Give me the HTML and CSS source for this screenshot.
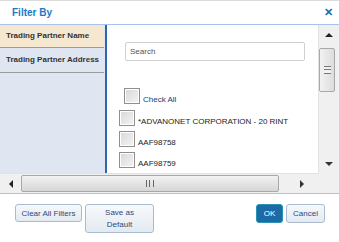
FILE: index.html
```html
<!DOCTYPE html>
<html lang="en">
<head>
    <meta charset="UTF-8">
    <title>Filter By</title>
    <link rel="stylesheet" href="styles.css">
</head>
<body>
    <div class="dialog">
        <div class="header">
            <h2>Filter By</h2>
            <span class="close">&#x2715;</span>
        </div>
        <div class="body">
            <div class="nav">
                <div class="nav-item active">Trading Partner Name</div>
                <div class="nav-item">Trading Partner Address</div>
            </div>
            <div class="content">
                <input type="text" class="search" placeholder="Search">
                <div class="check-all">
                    <span class="box"></span>
                    <span class="label all">Check All</span>
                </div>
                <div class="check-row">
                    <span class="box"></span>
                    <span class="label">*ADVANONET CORPORATION - 20 RINT</span>
                </div>
                <div class="check-row">
                    <span class="box"></span>
                    <span class="label">AAF98758</span>
                </div>
                <div class="check-row">
                    <span class="box"></span>
                    <span class="label">AAF98759</span>
                </div>
                <div class="check-row">
                    <span class="box"></span>
                    <span class="label"></span>
                </div>
            </div>
            <div class="vscroll">
                <div class="arrow up"></div>
                <div class="vthumb"><span class="grip"></span></div>
                <div class="spacer"></div>
                <div class="arrow down"></div>
            </div>
        </div>
        <div class="hscroll">
            <div class="htrack">
                <div class="arrow left"></div>
                <div class="hthumb"><span class="grip"></span></div>
                <div class="arrow right"></div>
            </div>
            <div class="corner"></div>
        </div>
        <div class="footer">
            <div class="footer-left">
                <button class="btn clear">Clear All Filters</button>
                <button class="btn tall">Save as<br>Default</button>
            </div>
            <div class="footer-right">
                <button class="btn primary">OK</button>
                <button class="btn cancel">Cancel</button>
            </div>
        </div>
    </div>
</body>
</html>
```

FILE: styles.css
```css
body {
    margin: 0;
    padding: 0;
    background-color: #fff;
    font-family: "Liberation Sans", Arial, sans-serif;
}
.dialog {
    width: 339px;
    height: 242px;
    display: flex;
    flex-direction: column;
    overflow: hidden;
}
.header {
    height: 23px;
    border-top: 1px solid #dcdcdc;
    border-bottom: 1px solid #a9c3e8;
    display: flex;
    align-items: center;
    justify-content: space-between;
    padding: 0 6px 0 12px;
}
.header h2 {
    margin: 0;
    font-size: 10px;
    font-weight: bold;
    color: #1b79c3;
}
.close {
    font-size: 11px;
    font-weight: bold;
    color: #1a6fb5;
}
.body {
    height: 148px;
    display: flex;
}
.nav {
    width: 105px;
    background-color: #dfe6f2;
    border-right: 2px solid #2e67ae;
}
.nav-item {
    height: 22px;
    line-height: 22px;
    padding-left: 6px;
    margin-right: 1px;
    border-bottom: 1px solid #9a9a9a;
    font-size: 8px;
    font-weight: bold;
    color: #333;
}
.nav-item.active {
    background-color: #f5e7d0;
}
.nav-item + .nav-item {
    height: 24px;
    line-height: 24px;
}
.content {
    flex: 1;
    padding: 17px 0 0 12px;
    overflow: hidden;
}
.search {
    display: block;
    box-sizing: border-box;
    width: 180px;
    height: 19px;
    margin: 0 0 0 6px;
    padding: 0 4px;
    border: 1px solid #d0d0d0;
    border-radius: 2px;
    font-family: "Liberation Sans", Arial, sans-serif;
    font-size: 8px;
    color: #333;
}
.search::placeholder {
    color: #555;
}
.check-all, .check-row {
    display: flex;
    align-items: flex-end;
    white-space: nowrap;
}
.check-all {
    margin: 27px 0 0 5px;
}
.check-row {
    margin-top: 5px;
}
.check-all + .check-row {
    margin-top: 6px;
}
.box {
    box-sizing: border-box;
    width: 16px;
    height: 16px;
    flex: none;
    border: 1px solid #8f8f8f;
    box-shadow: inset 0 0 0 1px #fff;
    background: linear-gradient(135deg, #d8d8d8, #f4f4f4);
}
.label {
    margin-left: 3px;
    font-size: 8px;
    line-height: 8px;
    color: #222;
}
.label.all {
    color: #243a70;
}
.vscroll {
    width: 21px;
    display: flex;
    flex-direction: column;
    background-color: #f0f0f0;
    box-sizing: border-box;
    border-left: 1px solid #e2e2e2;
}
.arrow {
    width: 0;
    height: 0;
}
.arrow.up {
    margin: 8px 0 0 6px;
    border-left: 4px solid transparent;
    border-right: 4px solid transparent;
    border-bottom: 4px solid #222;
}
.arrow.down {
    margin: 0 0 7px 6px;
    border-left: 4px solid transparent;
    border-right: 4px solid transparent;
    border-top: 4px solid #333;
}
.vthumb {
    box-sizing: border-box;
    width: 16px;
    height: 44px;
    margin-top: 11px;
    border: 1px solid #a8a8a8;
    border-radius: 2px;
    background: linear-gradient(to right, #f2f2f2, #dcdcdc);
    display: flex;
    align-items: center;
    justify-content: center;
}
.vthumb .grip {
    width: 7px;
    height: 6px;
    border-top: 1px solid #777;
    border-bottom: 1px solid #777;
    background: linear-gradient(#f2f2f2 2px, #777 2px, #777 3px, #f2f2f2 3px);
}
.spacer {
    flex: 1;
}
.hscroll {
    height: 20px;
    display: flex;
    border-bottom: 1px solid #a9c3e8;
}
.htrack {
    width: 318px;
    display: flex;
    align-items: center;
    background-color: #f0f0f0;
    border-top: 1px solid #e2e2e2;
    box-sizing: border-box;
}
.arrow.left {
    margin: 0 8px 0 9px;
    border-top: 4px solid transparent;
    border-bottom: 4px solid transparent;
    border-right: 4px solid #222;
}
.arrow.right {
    margin-left: 21px;
    border-top: 4px solid transparent;
    border-bottom: 4px solid transparent;
    border-left: 4px solid #333;
}
.hthumb {
    box-sizing: border-box;
    width: 258px;
    height: 17px;
    border: 1px solid #a8a8a8;
    border-radius: 2px;
    background: linear-gradient(#f2f2f2, #d6d6d6);
    display: flex;
    align-items: center;
    justify-content: center;
}
.hthumb .grip {
    width: 6px;
    height: 7px;
    border-left: 1px solid #666;
    border-right: 1px solid #666;
    background: linear-gradient(to right, transparent 2px, #666 2px, #666 3px, transparent 3px);
}
.corner {
    flex: 1;
    background-color: #f0f0f0;
}
.footer {
    flex: 1;
    display: flex;
    justify-content: space-between;
    align-items: flex-start;
    padding: 10px 14px 0 15px;
}
.footer-left, .footer-right {
    display: flex;
    gap: 3px;
    align-items: flex-start;
}
.btn {
    height: 18px;
    margin: 0;
    padding: 0;
    border: 1px solid #a9bccf;
    border-radius: 3px;
    background: linear-gradient(#f7f9fb, #e3eaf1);
    font-family: "Liberation Sans", Arial, sans-serif;
    font-size: 8px;
    color: #2b4a78;
}
.btn.clear {
    width: 67px;
}
.btn.tall {
    width: 69px;
    height: 29px;
    line-height: 12px;
}
.footer-right .btn {
    height: 19px;
}
.btn.primary {
    width: 27px;
    background: #1d6aa5;
    border-color: #2a93b8;
    color: #fff;
}
.btn.cancel {
    width: 39px;
}
```
